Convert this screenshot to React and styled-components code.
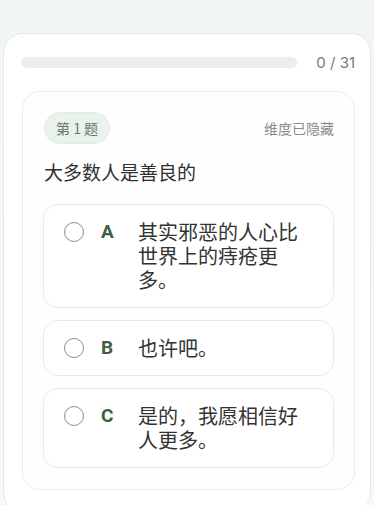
import React from 'react';
import styled, { createGlobalStyle } from 'styled-components';

const GlobalStyle = createGlobalStyle`
  html, body {
    margin: 0;
    padding: 0;
    background: linear-gradient(180deg, #f1f6f2 0%, #f6f9f7 100%);
    font-family: "Noto Sans CJK SC", "Noto Sans", sans-serif;
    overflow: hidden;
  }
`;

const Page = styled.div`
  height: 505px;
  padding-top: 33px;
  box-sizing: border-box;
  overflow: hidden;
`;

const Shell = styled.div`
  margin-left: 3px;
  width: 368px;
  min-height: 480px;
  box-sizing: border-box;
  padding: 18px 15px 0 17px;
  background: #ffffff;
  border: 1px solid #e2eae4;
  border-radius: 20px;
`;

const ProgressRow = styled.div`
  display: flex;
  align-items: center;
  gap: 19px;
  height: 20px;
  margin-bottom: 19px;
`;

const Track = styled.div`
  flex: 1;
  height: 11px;
  border-radius: 6px;
  background: #eceeee;
  overflow: hidden;
`;

const Fill = styled.div`
  height: 100%;
  background: #4f7a5a;
`;

const Count = styled.span`
  font-family: Inter, Roboto, "Liberation Sans", sans-serif;
  font-size: 15px;
  color: #7a7a7a;
  white-space: nowrap;
`;

const QuestionCard = styled.div`
  margin-left: 1px;
  border: 1px solid #e9eeea;
  border-radius: 18px;
  background: #fefefe;
  padding: 20px 20px 21px 21px;
`;

const Header = styled.div`
  display: flex;
  align-items: center;
  justify-content: space-between;
  margin-bottom: 14px;
`;

const Badge = styled.span`
  display: inline-block;
  padding: 5px 11px;
  line-height: 20px;
  font-size: 14px;
  color: #66796b;
  background: #e9f2eb;
  border: 1px solid #e2ece4;
  border-radius: 16px;
`;

const Hint = styled.span`
  font-size: 14px;
  color: #8b8b8b;
`;

const Question = styled.div`
  font-size: 19px;
  line-height: 28px;
  color: #303030;
  margin-bottom: 18px;
`;

const Options = styled.div`
  display: flex;
  flex-direction: column;
  gap: 12px;
  margin-left: -1px;
`;

const Option = styled.div`
  display: flex;
  align-items: flex-start;
  padding: 15px 28px 15px 20px;
  border: 1px solid #e8eae9;
  border-radius: 15px;
  background: #ffffff;
`;

const Radio = styled.span`
  flex: none;
  width: 20px;
  height: 20px;
  box-sizing: border-box;
  margin-top: 2px;
  margin-right: 17px;
  border: 1.6px solid #8e8e8e;
  border-radius: 50%;
`;

const Letter = styled.span`
  flex: none;
  width: 37px;
  font-family: Roboto, "Liberation Sans", sans-serif;
  font-weight: 700;
  font-size: 19px;
  line-height: 24px;
  color: #3b5e44;
`;

const OptionText = styled.span`
  flex: 1;
  font-size: 20px;
  line-height: 24px;
  color: #333333;
`;

const options = [
  { key: 'A', text: '其实邪恶的人心比世界上的痔疮更多。' },
  { key: 'B', text: '也许吧。' },
  { key: 'C', text: '是的，我愿相信好人更多。' },
];

const answered = 0;
const total = 31;

export default function App() {
  return (
    <Page>
      <GlobalStyle />
      <Shell>
        <ProgressRow>
          <Track>
            <Fill style={{ width: `${(answered / total) * 100}%` }} />
          </Track>
          <Count>{answered} / {total}</Count>
        </ProgressRow>
        <QuestionCard>
          <Header>
            <Badge>第 1 题</Badge>
            <Hint>维度已隐藏</Hint>
          </Header>
          <Question>大多数人是善良的</Question>
          <Options>
            {options.map(o => (
              <Option key={o.key}>
                <Radio />
                <Letter>{o.key}</Letter>
                <OptionText>{o.text}</OptionText>
              </Option>
            ))}
          </Options>
        </QuestionCard>
      </Shell>
    </Page>
  );
}
